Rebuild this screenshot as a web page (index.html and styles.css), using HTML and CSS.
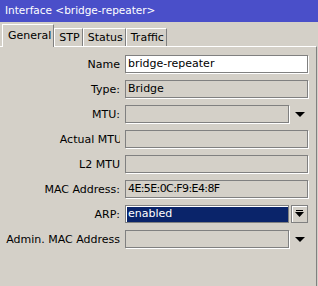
FILE: index.html
```html
<!DOCTYPE html>
<html lang="en">
<head>
  <meta charset="UTF-8" />
  <title>Interface &lt;bridge-repeater&gt;</title>
  <link rel="stylesheet" href="styles.css">
</head>
<body>
  <div class="titlebar">Interface &lt;bridge-repeater&gt;</div>
  <div class="tabs">
    <div class="tab active">General</div>
    <div class="tab">STP</div>
    <div class="tab">Status</div>
    <div class="tab">Traffic</div>
  </div>
  <div class="panel">
    <div class="row">
      <div class="label">Name</div>
      <div class="field"><div class="box edit">bridge-repeater</div></div>
    </div>
    <div class="row">
      <div class="label">Type:</div>
      <div class="field"><div class="box">Bridge</div></div>
    </div>
    <div class="row">
      <div class="label">MTU:</div>
      <div class="field"><div class="box"></div><div class="arrow"><span class="tri"></span></div></div>
    </div>
    <div class="row">
      <div class="label"><span class="cut">Actual MTU</span></div>
      <div class="field"><div class="box"></div></div>
    </div>
    <div class="row">
      <div class="label">L2 MTU</div>
      <div class="field"><div class="box"></div></div>
    </div>
    <div class="row">
      <div class="label">MAC Address:</div>
      <div class="field"><div class="box mono">4E:5E:0C:F9:E4:8F</div></div>
    </div>
    <div class="row">
      <div class="label">ARP:</div>
      <div class="field">
        <div class="box selected">enabled</div>
        <div class="button">
          <svg width="9" height="8" viewBox="0 0 9 8"><rect x="1" y="0" width="7" height="1" fill="#000"/><path d="M0 2h9L4.5 7z" fill="#000"/></svg>
        </div>
      </div>
    </div>
    <div class="row">
      <div class="label">Admin. MAC Address</div>
      <div class="field"><div class="box"></div><div class="arrow"><span class="tri"></span></div></div>
    </div>
  </div>
</body>
</html>
```
FILE: styles.css
```css
html, body {
  margin: 0;
  padding: 0;
  height: 100%;
  overflow: hidden;
  background: #d4d0c8;
  font-family: "DejaVu Sans", sans-serif;
  font-size: 11px;
  color: #000;
}
.titlebar {
  height: 22px;
  line-height: 21px;
  padding-left: 5px;
  background: #4a4fc9;
  color: #fff;
  font-size: 10.5px;
}
.tabs {
  display: flex;
  align-items: flex-end;
  height: 23px;
  margin-top: 1px;
  padding-left: 2px;
}
.tab {
  height: 18px;
  line-height: 18px;
  padding: 0 2px 0 4px;
  border-top: 1px solid #fff;
  border-left: 1px solid #fff;
  border-right: 1px solid #808080;
  box-sizing: border-box;
}
.tab.active {
  height: 23px;
  line-height: 21px;
  padding: 0 2px 0 5px;
  position: relative;
  top: 1px;
  background: #d4d0c8;
}
.panel {
  height: 240px;
  border-top: 1px solid #fff;
  border-right: 1px solid #808080;
  margin-right: 1px;
  padding-top: 8px;
  box-sizing: border-box;
}
.row {
  display: grid;
  grid-template-columns: 120px 1fr;
  column-gap: 5px;
  height: 18px;
  margin: 0 8px 7px 0;
  align-items: center;
}
.label {
  text-align: right;
  white-space: nowrap;
  overflow: hidden;
}
.label .cut {
  margin-right: -2px;
}
.field {
  display: flex;
  height: 18px;
}
.box {
  flex: 1;
  height: 18px;
  line-height: 16px;
  padding-left: 2px;
  border: 1px solid #808080;
  box-shadow: 1px 1px 0 #fff;
  box-sizing: border-box;
  white-space: nowrap;
  overflow: hidden;
}
.box.edit {
  background: #fff;
}
.box.mono {
  letter-spacing: -0.6px;
}
.box.selected {
  background: #0a246a;
  color: #fff;
  box-shadow: inset 1px 1px 0 #fff;
}
.arrow {
  width: 19px;
  display: flex;
  align-items: center;
  justify-content: center;
}
.tri {
  width: 0;
  height: 0;
  margin-left: 2px;
  border-left: 5px solid transparent;
  border-right: 5px solid transparent;
  border-top: 5px solid #000;
}
.button {
  width: 17px;
  margin-left: 2px;
  display: flex;
  align-items: center;
  justify-content: center;
  border: 1px solid #808080;
  box-shadow: inset 1px 1px 0 #fff;
  box-sizing: border-box;
}
```
